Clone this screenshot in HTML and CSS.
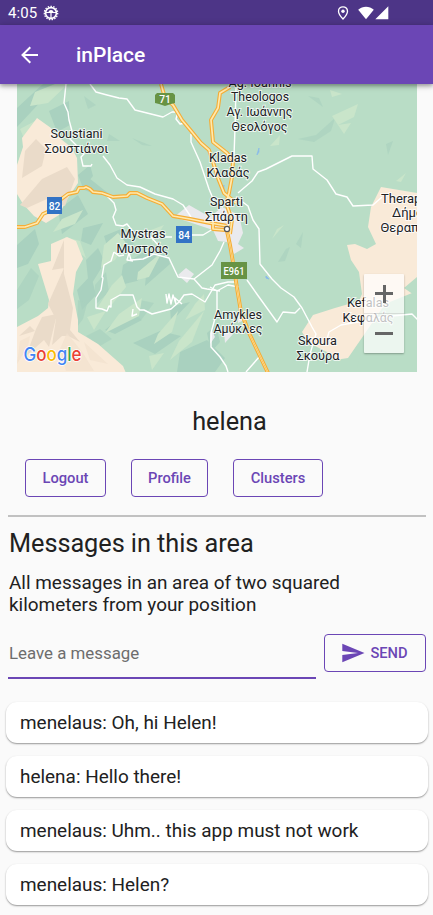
FILE: index.html
```html
<!DOCTYPE html>
<html lang="en">
<head>
<meta charset="utf-8">
<title>inPlace</title>
<link rel="stylesheet" href="styles.css">
</head>
<body>
<div class="status">
  <span class="time">4:05</span>
  <svg class="gear" width="16" height="16" viewBox="0 0 16 16"><circle cx="8" cy="8" r="5.400" fill="none" stroke="#fff" stroke-width="1.600"/><circle cx="8" cy="8" r="6.700" fill="none" stroke="#fff" stroke-width="1.300" stroke-dasharray="1.500 1.300"/><path d="M3 7.500h10M8 8v5" stroke="#fff" stroke-width="1.200" fill="none"/><path d="M5.500 7.500a2.500 2.500 0 0 1 5 0z" fill="#fff"/></svg>
  <svg class="pin" width="12" height="14" viewBox="0 0 12 14"><path d="M6 .8C3.400.8 1.500 2.700 1.500 5.200 1.500 8.300 6 13 6 13s4.500-4.700 4.500-7.800C10.500 2.700 8.600.8 6 .8z" fill="none" stroke="#fff" stroke-width="1.300"/><circle cx="6" cy="5.200" r="1.700" fill="#fff"/></svg>
  <svg class="wifi" width="16" height="14" viewBox="0 0 16 14"><path d="M.2 3.700C4.600-.2 11.400-.2 15.800 3.700L8 13.300z" fill="#fff"/></svg>
  <svg class="signal" width="14" height="14" viewBox="0 0 14 14"><path d="M13.300.3V13.300H.3z" fill="#fff"/></svg>
</div>
<header class="appbar">
  <svg width="18" height="18" viewBox="0 0 18 18"><path d="M17 9H2M9.300 1.200L1.500 9l7.800 7.800" fill="none" stroke="#fff" stroke-width="2"/></svg>
  <h1>inPlace</h1>
</header>
<main>
<div class="map">
<svg width="400" height="288" viewBox="17 84 400 288">
  <rect x="17" y="84" width="400" height="288" fill="#b9ddc6"/>
  <g fill="#a9d1bf">
    <path d="M17 127L46 96 63 84 43 84 17 108zM49 111l20-10 1 24-13 7zM78 175l12-10 3 11-10 12zM80 188l9-10 20 16-15 0zM58 210l20-15 10 19-26 20zM17 245l18-16 4 15-11 20-11 4zM83 228l20-5-12 22-10-4zM86 260l12-12 7 14-16 26zM77 290l14-15 5 20-14 15zM104 236l17-7 13 15-24 11z"/>
    <path d="M123 265l21-13 13 12-20 17-17 4zM148 255l18-7 4 16-25 22zM105 330l25-20 12 10-27 14zM133 343l27-12 21 5-26 18zM180 352l27-12 18 18-10 14h-38zM207 333l9-8 4 17-9 10zM170 307l20-5-19 20z"/>
    <path d="M17 290l14-22 8 8-10 24-12 9zM78 300l9 4-4 15-6 8zM95 285l11-13 3 20-14 13zM86 336l14-7 12 10-12 7zM140 300l14 3-12 16-14 2z" opacity=".7"/>
    <path d="M298 139l18-4 19-17-4 13-17 11zM386 144l7-3-5 14zM308 96l11 2 4 9zM109 134l11 7-13 0zM132 138l20 8-10-1zM84 96l12 9-8 4zM278 262l8-13 4-2-5 14zM296 244l7-12-2 16z" opacity=".65"/>
  </g>
  <g fill="#c9e5ca">
    <path d="M35 92l20-8h13l-20 19-18 3zM20 129l17-9 7 3-18 20zM62 219l21-9-8 14-22 8zM65 237l15 4 6 17-19-15zM104 245l14-12 8 10-11 17-14 8zM112 285l10-10 4 12-17 21-13 2zM138 272l24-20-13 25-12 3zM151 230l13-5-12 18zM87 317l19-6-12 19zM119 314l23-16-3 18-34 17zM158 334l20-23-6 21-18 12zM179 341l25-30-12 31-22 18zM149 356l15-3-12 17zM195 304l9-10 1 16-20 10z"/>
    <path d="M332 116l26-12-4 13-16 8zM338 125l13-2-7 11zM270 146l10-11-1 10zM396 181l10-8-5 9zM277 229l7-4-12 14zM330 90l12 4-10 3z"/>
  </g>
  <g fill="#f9ead8">
    <path d="M22 138L37 118l14 10 5 7 16 13 5 10 1 25-12 18-7 14-13 8-12-7-11-12-6-10V165l6-18zM51 244l16-7 9 4 7 18-7 13-3 22 5 26 0 12 20 12 25 22 5 12H17V327l21-11 10-8 1-8-11-36 13-3z"/>
    <path d="M347 245l8-1 12 5 9-5-8-17 3-20 10-20 36 6v98l-32 13-17 25-20 29-13 2-8-8-18-9-7-11 11-17 22-7 24-7 3-7-3-22-8-12z"/>
  </g>
  <g fill="#eadbc9">
    <path d="M25 151l11-12 10 10-4 17-20 12zM42 179l25-12 8 12-10 27-18-7-20 9-7-3zM64 240v34l9 34-3 22 10 12-12-6-6 0-10 9 4-26-8-15 16-36-12 2zM42 317l15-3-8 33-5-7-18 16 10-27zM35 331l-16 5 11-10z"/>
  </g>
  <path d="M67 333l16 20 11 18H66l-6-22zM20 341l10-5-2 10-11 18zM84 342l24 22-18-4z" fill="#f1e1cf" opacity=".75"/>
  <path d="M404 288l13-11v20zM364 342l33-13 20-1v44h-61z" fill="#b9ddc6"/>
  <path d="M174 217l15-12 21 12 12-10 17 8 4 18-5 11 6 4-10 6-7-12-9-1-5-11zM178 275l8-7 8 6-7 9zM211 328l4 9-5 7zM224 332l9 2-8 9zM238 313l8 6-8 4z" fill="#eaeaed"/>
  <path d="M257 154l2-6 0 4-2 3zM222 190l2-5 0 5z" fill="#8bbbea" stroke="#8bbbea" stroke-width=".7"/><path d="M266 276l3 3-3-1z" fill="#8bbbea" stroke="#8bbbea"/>

  <g fill="none" stroke="#fff" stroke-width="1.400" stroke-linejoin="round">
    <path d="M66 84l-2 19 4 9 1 8 3 11-2 8 7 7 7 8-3 3 2 9h8l1-2M103 156l7 9 7 13 10 7 13 2 15 7 18 5 10 6 8 12"/>
    <path d="M90 84l6 8 11 3 12 3 8 1 8 11 16 4 12 3 9-5 6 0-2 7 4 5 6-1M191 134l0 8 9 20 9 27 5 12 9 6"/>
    <path d="M236 88l-1 40-1 28-2 11M238 193l14-12 6-9 8-3 26-13h20l1 13 14 11 9 14 11 3 6 9 20-1 9-8M236 197l12 9 5 14 6 9 1 35 12 15 9 9 13 9 8 11 10 19 4 7-6 20-3 18"/>
    <path d="M107 196l7 7 2 7-3 7 3 8 7 1 4-2 7 9 8 2 9 2 7 8M129 253l2 7 12-1 11-5 15 4 9 19 16 2 8 9 5 1 13 2M157 237h15M192 235h11l10-6M194 279l18-14 8-14 4-9"/>
    <path d="M114 252l-3 9-7 4-2 12 1 1-2 12-5 8 0 10 6 1 5 2 2-5 2 1 0-7 9-5 13 0 4 12 3 3 4 0 8 4 19-5 8-7 5-7 8-1 13 8 10-17 13-3h8M114 252l5 4 5-1M129 253l-2 7 6 1M133 309l-1 7 5-2M166 294l1 9 2-9 2 10 2-9 3 9-1-6 7 6"/>
    <path d="M210 287l7 4v20l-6 22 0 14 9 10 6 9 2 6M217 291l11-6 11 2M247 280l12 17 18 25 6-10 12 1 5-5M246 372l14-16M327 339l2-7 12-7 17-3 24-5 30-3 6 6"/>
  </g>
  <g fill="none" stroke-linejoin="round">
    <g stroke="#f5ad35" stroke-width="3.900"><path d="M161 84l4 14 8 7 9 15 10 12 9 11 8 7 4 12 5 16 6 15 12 10M230 87l-10 6-2 15-7 12 2 22 14 11 6 8-1 16-3 16-3 10 6 17-2 14M213 221l0 8 12 1"/><path d="M17 227h8l12-4 6-9 11-5 6-9 8-6 9-2 2-4h5l2-1 4 2 3 3 9 1 11 4 14-1 3-3h7l10 5 15 6 11 12 17 3 20 4 18 3"/><path d="M227 231l3 14 4 23 3 20 4 24 9 23 18 38"/></g>
    <g stroke="#ffe9ad" stroke-width="1.700"><path d="M161 84l4 14 8 7 9 15 10 12 9 11 8 7 4 12 5 16 6 15 12 10M230 87l-10 6-2 15-7 12 2 22 14 11 6 8-1 16-3 16-3 10 6 17-2 14M213 221l0 8 12 1"/><path d="M17 227h8l12-4 6-9 11-5 6-9 8-6 9-2 2-4h5l2-1 4 2 3 3 9 1 11 4 14-1 3-3h7l10 5 15 6 11 12 17 3 20 4 18 3"/><path d="M227 231l3 14 4 23 3 20 4 24 9 23 18 38"/></g>
    <path d="M227 231l3 14 4 23 3 20 4 24 9 23 18 38" stroke="#f5ad35" stroke-width=".7"/>
  </g>
  <circle cx="227" cy="229" r="2.600" fill="#fff" stroke="#555" stroke-width="1.200"/>
  <path d="M155 95l2-2h16l2 2v8l-4 1-6 2-6-2-4-1z" fill="#679344"/><path d="M47 197h15v17H47zM176 226h16v17h-16z" fill="#3273c5"/><path d="M221 262h26v17h-26z" fill="#679344"/>
  <g class="badge"><text x="165" y="103">71</text><text x="54.500" y="210">82</text><text x="184" y="239">84</text><text x="234" y="274.500" textLength="21" lengthAdjust="spacingAndGlyphs">E961</text></g>
  <g class="place">
    <text x="260" y="86.500" textLength="63" lengthAdjust="spacingAndGlyphs">Ag. Ioannis</text><text x="260" y="101" textLength="58" lengthAdjust="spacingAndGlyphs">Theologos</text><text x="259.500" y="116" textLength="66" lengthAdjust="spacingAndGlyphs">Αγ. Ιωάννης</text><text x="259.500" y="130.500" textLength="56" lengthAdjust="spacingAndGlyphs">Θεολόγος</text>
    <text x="76.500" y="138" textLength="52" lengthAdjust="spacingAndGlyphs">Soustiani</text><text x="76.500" y="153" textLength="64" lengthAdjust="spacingAndGlyphs">Σουστιάνοι</text>
    <text x="228" y="162" textLength="38" lengthAdjust="spacingAndGlyphs">Kladas</text><text x="228" y="176.500" textLength="43" lengthAdjust="spacingAndGlyphs">Κλαδάς</text>
    <text x="226.500" y="206" textLength="33" lengthAdjust="spacingAndGlyphs">Sparti</text><text x="226.500" y="221" textLength="43" lengthAdjust="spacingAndGlyphs">Σπάρτη</text>
    <text x="143" y="238" textLength="45" lengthAdjust="spacingAndGlyphs">Mystras</text><text x="142.500" y="252.500" textLength="52" lengthAdjust="spacingAndGlyphs">Μυστράς</text>
    <text x="238" y="318.500" textLength="48" lengthAdjust="spacingAndGlyphs">Amykles</text><text x="238" y="333" textLength="49" lengthAdjust="spacingAndGlyphs">Αμύκλες</text>
    <text x="317.500" y="345" textLength="39" lengthAdjust="spacingAndGlyphs">Skoura</text><text x="318" y="359.500" textLength="43" lengthAdjust="spacingAndGlyphs">Σκούρα</text>
    <text x="368" y="307" textLength="42" lengthAdjust="spacingAndGlyphs">Kefalas</text><text x="368" y="322" textLength="51" lengthAdjust="spacingAndGlyphs">Κεφαλάς</text>
    <text class="start" x="381" y="202.500">Therapnes</text><text class="start" x="392" y="217">Δήμος</text><text class="start" x="380.500" y="232">Θεραπνών</text>
  </g>
  <g class="google"><text x="23.500" y="360.500" textLength="58" lengthAdjust="spacingAndGlyphs"><tspan fill="#4285f4">G</tspan><tspan fill="#ea4335">o</tspan><tspan fill="#fbbc05">o</tspan><tspan fill="#4285f4">g</tspan><tspan fill="#34a853">l</tspan><tspan fill="#ea4335">e</tspan></text></g>
</svg>
<div class="zoom"><span class="plus"></span><span class="minus"></span></div>
</div>
<h2 class="user">helena</h2>
<nav><button class="logout">Logout</button><button class="profile">Profile</button><button class="clusters">Clusters</button></nav>
<section class="area">
  <h2>Messages in this area</h2>
  <p>All messages in an area of two squared<br>kilometers from your position</p>
  <form><label>Leave a message</label><button type="button" class="send"><svg width="23" height="20" viewBox="0 0 23 20"><path d="M.3.700L22.500 10 .3 19.300V12.100L16 10 .3 7.900z" fill="#6b46b5"/></svg><span>SEND</span></button></form>
</section>
<ul>
  <li><span>menelaus: Oh, hi Helen!</span></li>
  <li><span>helena: Hello there!</span></li>
  <li><span>menelaus: Uhm.. this app must not work</span></li>
  <li><span>menelaus: Helen?</span></li>
</ul>
</main>
</body>
</html>
```
FILE: styles.css
```css
* { box-sizing: border-box; }
body { margin: 0; width: 433px; height: 915px; overflow: hidden; background: #fafafa; color: #212121; font-family: Roboto, "Noto Sans", sans-serif; }
h1, h2, p, ul { margin: 0; padding: 0; font-weight: 400; }
.status { height: 25px; display: flex; align-items: center; background: #4d3587; color: #fff; padding: 0 44px 0 8px; }
.time { font-size: 15px; letter-spacing: .1px; width: 35px; line-height: 25px; padding-top: 2px; }
.pin { margin-left: auto; margin-right: 9px; }
.wifi { margin-right: 1px; }
.appbar { position: relative; z-index: 1; height: 59px; display: flex; align-items: center; padding-left: 21px; background: #6b46b5; color: #fff; box-shadow: 0 2px 4px rgba(0,0,0,.3), 0 1px 8px rgba(0,0,0,.18); }
.appbar h1 { margin-left: 37px; padding-top: 1px; font-size: 21px; font-weight: 500; letter-spacing: 0; }
.map { position: relative; width: 400px; height: 288px; margin-left: 17px; overflow: hidden; }
.map > svg { display: block; }
.place text { font: 13.300px Roboto, "Noto Sans", sans-serif; text-anchor: middle; fill: #202124; stroke: rgba(255,255,255,.75); stroke-width: 2px; paint-order: stroke; }
.place text.start { text-anchor: start; font-size: 13px; }
.badge text { font: 500 10.300px Roboto, sans-serif; fill: #fff; text-anchor: middle; }
.google text { font: 500 18.500px Inter, sans-serif; stroke: #fff; stroke-width: 1.500px; paint-order: stroke; }
.zoom { position: absolute; left: 347px; top: 190px; width: 40px; height: 79px; background: rgba(255,255,255,.72); box-shadow: 0 1px 2px rgba(0,0,0,.3); border-radius: 1px; display: flex; flex-direction: column; }
.zoom span { flex: 1; display: grid; place-items: center; }
.zoom .plus { border-bottom: 1px solid rgba(160,160,160,.3); }
.zoom span::before, .zoom .plus::after { content: ""; grid-area: 1/1; width: 18px; height: 3px; background: #666; }
.zoom .plus::after { width: 3px; height: 18px; }
.user { margin: 33px 0 0 26px; height: 34px; line-height: 34px; text-align: center; font-size: 25.300px; }
nav { display: flex; gap: 25px; margin: 20px 0 0 25px; }
button { height: 38px; padding: 0; border: 1px solid #6b46b5; border-radius: 4px; background: transparent; color: #6b46b5; font: 500 14.700px Roboto, sans-serif; letter-spacing: 0; }
.logout { width: 81px; }
.profile { width: 77px; }
.clusters { width: 90px; }
.area { margin: 18px 7px 0 8px; border-top: 2px solid #c1c1c1; }
.area h2 { margin: 12px 0 0 1px; font-size: 25.300px; line-height: 30px; letter-spacing: -.05px; }
.area p { margin: 13px 0 0 1px; font-size: 18.960px; line-height: 22px; }
form { display: flex; margin-top: 18px; gap: 8px; }
form label { width: 308px; height: 45px; border-bottom: 2px solid #6b46b5; color: #6d6d6d; font-size: 16.850px; line-height: 39px; padding-left: 1px; }
.send { width: 102px; display: flex; align-items: center; justify-content: center; gap: 5px; }
ul { list-style: none; margin: 23px 5px 0 6px; display: flex; flex-direction: column; gap: 13px; }
li { height: 41px; border-radius: 11px; background: #fff; padding-left: 14px; font-size: 18.960px; line-height: 41px; box-shadow: 0 1px 2px rgba(0,0,0,.3), 0 1px 1px rgba(0,0,0,.12); }
```
